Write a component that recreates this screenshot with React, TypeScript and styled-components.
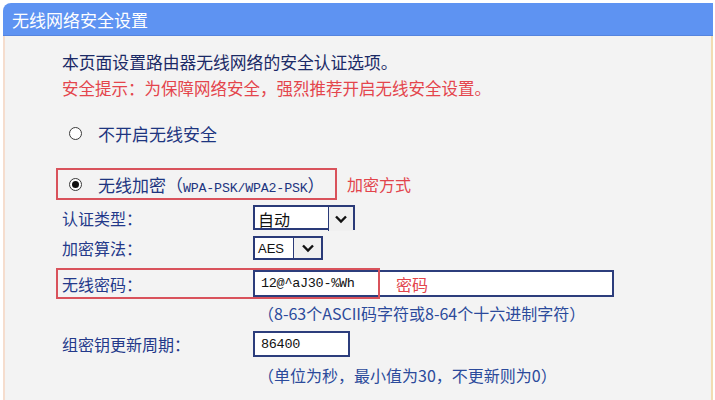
import React from 'react';
import styled, { createGlobalStyle } from 'styled-components';

const GlobalStyle = createGlobalStyle`
  html, body {
    margin: 0;
    padding: 0;
    background: #ffffff;
  }
  body {
    font-family: "Noto Sans CJK SC", "Noto Sans", sans-serif;
  }
`;

const Panel = styled.div`
  margin: 3px 2px 0 3px;
  height: 397px;
  display: flex;
  flex-direction: column;
`;

const Header = styled.div`
  height: 33px;
  flex: none;
  display: flex;
  align-items: center;
  padding-left: 9px;
  background: #5e93f2;
  border-radius: 8px 0 0 0;
  border-bottom: 1px solid #5584de;
  box-sizing: border-box;
  color: #ffffff;
  font-size: 17px;
`;

const Body = styled.div`
  flex: 1;
  background: #f3f3f3;
  border-left: 2px solid #f5ddce;
  border-right: 2px solid #f2dcb2;
  padding: 13px 0 0 51px;
`;

const Intro = styled.div<{ $warn?: boolean }>`
  height: 26px;
  line-height: 26px;
  padding-left: 6px;
  font-size: ${(p) => (p.$warn ? '16.5px' : '16.8px')};
  color: ${(p) => (p.$warn ? '#e4454c' : '#1b2a66')};
  white-space: nowrap;
`;

const RadioLine = styled.div<{ $top: number }>`
  display: flex;
  align-items: center;
  margin-top: ${(p) => p.$top}px;
`;

const RadioBox = styled.label<{ $marked?: boolean }>`
  display: flex;
  align-items: center;
  gap: 16px;
  width: 281px;
  height: 32px;
  box-sizing: border-box;
  padding-left: 11px;
  border: 2px solid ${(p) => (p.$marked ? '#d9525b' : 'transparent')};
  font-size: 17px;
  color: #1d3580;
  white-space: nowrap;
`;

const Radio = styled.span<{ $checked?: boolean }>`
  width: 13px;
  height: 13px;
  flex: none;
  border-radius: 50%;
  border: 1px solid #3a3a3a;
  background: #ffffff;
  box-sizing: border-box;
  display: flex;
  align-items: center;
  justify-content: center;
  &::after {
    content: '';
    width: 7px;
    height: 7px;
    border-radius: 50%;
    background: ${(p) => (p.$checked ? '#111111' : 'transparent')};
  }
`;

const Mono = styled.span`
  font-family: "Liberation Mono", "DejaVu Sans Mono", monospace;
  font-size: 13.3px;
  letter-spacing: -0.2px;
`;

const Note = styled.span`
  color: #e2444b;
  font-size: 16px;
  white-space: nowrap;
`;

const FieldRow = styled.div<{ $top: number; $height: number }>`
  position: relative;
  display: flex;
  align-items: center;
  margin-top: ${(p) => p.$top}px;
  height: ${(p) => p.$height}px;
`;

const Label = styled.div`
  width: 191px;
  flex: none;
  padding-left: 6px;
  font-size: 16px;
  color: #23398a;
  white-space: nowrap;
`;

const Select = styled.div<{ $textWidth: number; $arrowWidth: number; $height: number }>`
  display: grid;
  grid-template-columns: ${(p) => p.$textWidth}px ${(p) => p.$arrowWidth}px;
  height: ${(p) => p.$height}px;
  box-sizing: border-box;
  border: 2px solid #2a3a78;
  background: #ffffff;
`;

const SelectText = styled.div<{ $mono?: boolean }>`
  display: flex;
  align-items: center;
  padding-left: 3px;
  font-size: ${(p) => (p.$mono ? '13px' : '16px')};
  font-family: ${(p) => (p.$mono ? '"Liberation Sans", Arial, sans-serif' : 'inherit')};
  color: #111111;
`;

const SelectArrow = styled.div`
  display: flex;
  align-items: center;
  justify-content: center;
  border-left: 1px solid #2a3a78;
  background: #f0f0f0;
`;

const Input = styled.div<{ $width: number; $height: number }>`
  width: ${(p) => p.$width}px;
  height: ${(p) => p.$height}px;
  box-sizing: border-box;
  border: 2px solid #2c3d7c;
  background: #ffffff;
  display: flex;
  align-items: center;
  padding-left: 6px;
  font-family: "Liberation Mono", "DejaVu Sans Mono", monospace;
  font-size: 13.5px;
  color: #111111;
  letter-spacing: -0.3px;
`;

const Highlight = styled.span<{ $width: number }>`
  position: absolute;
  left: 0;
  top: 0;
  bottom: 0;
  width: ${(p) => p.$width}px;
  border: 2px solid #d9525b;
  box-sizing: border-box;
  pointer-events: none;
`;

const OverNote = styled(Note)`
  position: absolute;
  left: 340px;
  top: 50%;
  transform: translateY(-50%);
`;

const Hint = styled.div<{ $top: number }>`
  margin-top: ${(p) => p.$top}px;
  height: 20px;
  line-height: 20px;
  padding-left: 202px;
  font-size: 16px;
  color: #2b4a9b;
  white-space: nowrap;
`;

const Chevron = () => (
  <svg width="14" height="10" viewBox="0 0 14 10">
    <path d="M2 2.5 L7 7.5 L12 2.5" fill="none" stroke="#111" strokeWidth="2.4" />
  </svg>
);

export default function App() {
  return (
    <>
      <GlobalStyle />
      <Panel>
        <Header>无线网络安全设置</Header>
        <Body>
          <Intro>本页面设置路由器无线网络的安全认证选项。</Intro>
          <Intro $warn>安全提示：为保障网络安全，强烈推荐开启无线安全设置。</Intro>

          <RadioLine $top={16}>
            <RadioBox>
              <Radio />
              不开启无线安全
            </RadioBox>
          </RadioLine>
          <RadioLine $top={19}>
            <RadioBox $marked>
              <Radio $checked />
              <span>
                无线加密（<Mono>WPA-PSK/WPA2-PSK</Mono>）
              </span>
            </RadioBox>
            <Note style={{ marginLeft: 10 }}>加密方式</Note>
          </RadioLine>

          <FieldRow $top={5} $height={25}>
            <Label>认证类型：</Label>
            <Select $textWidth={73} $arrowWidth={25} $height={25}>
              <SelectText>自动</SelectText>
              <SelectArrow>
                <Chevron />
              </SelectArrow>
            </Select>
          </FieldRow>
          <FieldRow $top={6} $height={24}>
            <Label>加密算法：</Label>
            <Select $textWidth={38} $arrowWidth={28} $height={24}>
              <SelectText $mono>AES</SelectText>
              <SelectArrow>
                <Chevron />
              </SelectArrow>
            </Select>
          </FieldRow>
          <FieldRow $top={8} $height={31}>
            <Label>无线密码：</Label>
            <Input $width={361} $height={27}>12@^aJ30-%Wh</Input>
            <Highlight $width={324} />
            <OverNote>密码</OverNote>
          </FieldRow>
          <Hint $top={4}>（8-63个ASCII码字符或8-64个十六进制字符）</Hint>

          <FieldRow $top={8} $height={26}>
            <Label>组密钥更新周期：</Label>
            <Input $width={97} $height={26}>86400</Input>
          </FieldRow>
          <Hint $top={8}>（单位为秒，最小值为30，不更新则为0）</Hint>
        </Body>
      </Panel>
    </>
  );
}
